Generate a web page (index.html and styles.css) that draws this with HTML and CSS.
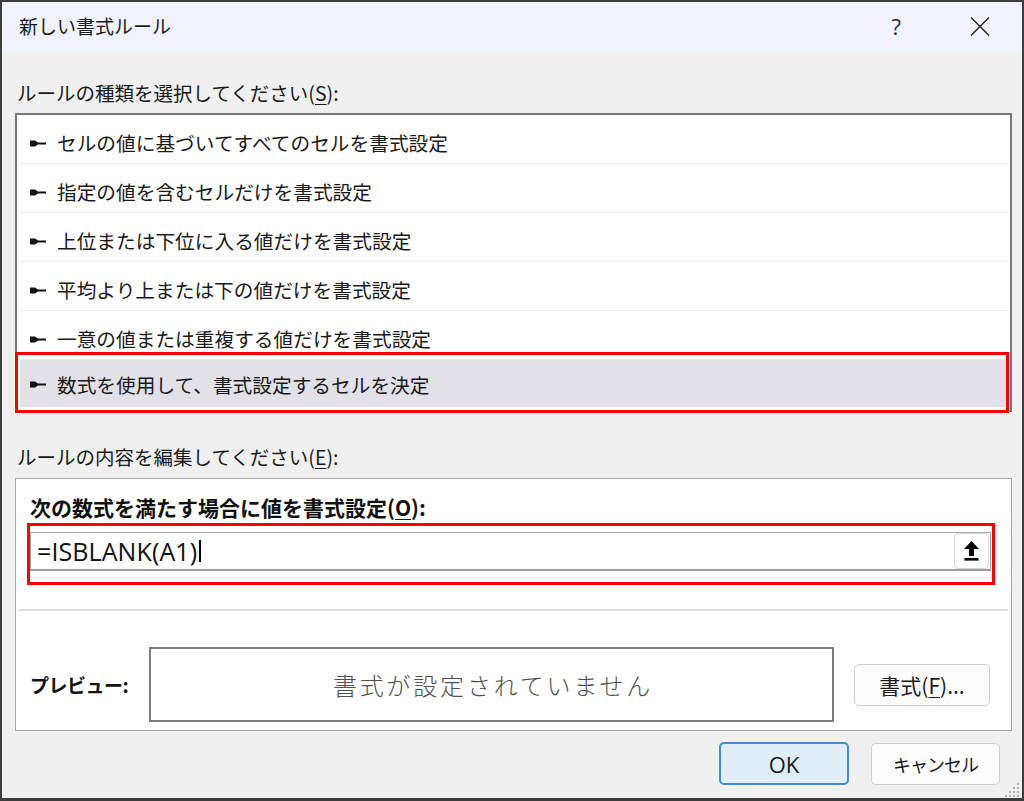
FILE: index.html
```html
<!DOCTYPE html>
<html lang="ja">
<head>
<meta charset="utf-8">
<title>新しい書式ルール</title>
<link rel="stylesheet" href="styles.css">
</head>
<body>
<div class="window">
  <div class="titlebar">
    <span class="title">新しい書式ルール</span>
    <span class="help">?</span>
    <svg class="close" width="20" height="19" viewBox="0 0 20 19"><path d="M1 0.5 L19 18.5 M19 0.5 L1 18.5" stroke="#1f1f1f" stroke-width="1.4" fill="none"/></svg>
  </div>
  <div class="body">
    <div class="label l1">ルールの種類を選択してください(<u>S</u>):</div>
    <div class="list">
      <div class="item"><svg class="bullet" width="16" height="7" viewBox="0 0 16 7"><path d="M0 0.5 H5 L8 2.4 H16 V4.6 H8 L5 6.5 H0 Z" fill="#111"/></svg><span>セルの値に基づいてすべてのセルを書式設定</span></div>
      <div class="item"><svg class="bullet" width="16" height="7" viewBox="0 0 16 7"><path d="M0 0.5 H5 L8 2.4 H16 V4.6 H8 L5 6.5 H0 Z" fill="#111"/></svg><span>指定の値を含むセルだけを書式設定</span></div>
      <div class="item"><svg class="bullet" width="16" height="7" viewBox="0 0 16 7"><path d="M0 0.5 H5 L8 2.4 H16 V4.6 H8 L5 6.5 H0 Z" fill="#111"/></svg><span>上位または下位に入る値だけを書式設定</span></div>
      <div class="item"><svg class="bullet" width="16" height="7" viewBox="0 0 16 7"><path d="M0 0.5 H5 L8 2.4 H16 V4.6 H8 L5 6.5 H0 Z" fill="#111"/></svg><span>平均より上または下の値だけを書式設定</span></div>
      <div class="item"><svg class="bullet" width="16" height="7" viewBox="0 0 16 7"><path d="M0 0.5 H5 L8 2.4 H16 V4.6 H8 L5 6.5 H0 Z" fill="#111"/></svg><span>一意の値または重複する値だけを書式設定</span></div>
      <div class="item selected"><svg class="bullet" width="16" height="7" viewBox="0 0 16 7"><path d="M0 0.5 H5 L8 2.4 H16 V4.6 H8 L5 6.5 H0 Z" fill="#111"/></svg><span>数式を使用して、書式設定するセルを決定</span></div>
      <div class="mark"></div>
    </div>
    <div class="label l2">ルールの内容を編集してください(<u>E</u>):</div>
    <div class="editbox">
      <div class="sublabel">次の数式を満たす場合に値を書式設定(<u>O</u>):</div>
      <div class="formula-mark">
        <div class="formula">
          <span class="ftext">=ISBLANK(A1)</span><span class="caret"></span>
          <button class="collapse" type="button"><svg width="15" height="20" viewBox="0 0 15 20"><path d="M7.5 0 L15 8 H10 V15 H5 V8 H0 Z" fill="#000"/><rect x="0.5" y="17" width="14" height="2.6" fill="#000"/></svg></button>
        </div>
      </div>
      <div class="sep"></div>
      <div class="preview-row">
        <div class="plabel">プレビュー:</div>
        <div class="preview">書式が設定されていません</div>
        <button class="btn fmt" type="button">書式(<u>F</u>)...</button>
      </div>
    </div>
    <div class="actions">
      <button class="btn ok" type="button">OK</button>
      <button class="btn cancel" type="button">キャンセル</button>
    </div>
  </div>
  <svg class="grip" width="16" height="14" viewBox="0 0 16 14"><g fill="#b4b4b4"><rect x="13" y="0" width="2" height="2"/><rect x="9" y="4" width="2" height="2"/><rect x="13" y="4" width="2" height="2"/><rect x="5" y="8" width="2" height="2"/><rect x="9" y="8" width="2" height="2"/><rect x="13" y="8" width="2" height="2"/><rect x="1" y="12" width="2" height="2"/><rect x="5" y="12" width="2" height="2"/><rect x="9" y="12" width="2" height="2"/><rect x="13" y="12" width="2" height="2"/></g></svg>
</div>
</body>
</html>
```
FILE: styles.css
```css
html, body {
  margin: 0;
  padding: 0;
}
body {
  width: 1024px;
  height: 801px;
  overflow: hidden;
  font-family: "Noto Sans CJK JP", "Noto Sans", sans-serif;
  color: #1a1a1a;
  background: #3b3b3b;
}
.window {
  box-sizing: border-box;
  width: 1024px;
  height: 801px;
  border-style: solid;
  border-color: #3c3c3c;
  border-width: 2px 2px 3px 2px;
  background: #f0f0f0;
  position: relative;
  display: flex;
  flex-direction: column;
}
.titlebar {
  height: 51px;
  flex: none;
  box-sizing: border-box;
  background: #f0f3f9;
  display: flex;
  align-items: center;
  padding: 0 32px 3px 17px;
}
.title {
  flex: 1;
  font-size: 19px;
  line-height: 24px;
  color: #1b1b1b;
}
.help {
  font-family: "Open Sans", "Noto Sans", sans-serif;
  font-size: 22px;
  line-height: 24px;
  color: #2a2a2a;
  margin-right: -2px;
}
.close {
  margin-left: 71px;
  display: block;
}
.body {
  flex: 1;
  display: flex;
  flex-direction: column;
  padding: 0 10px 0 13px;
}
.label {
  font-size: 19.5px;
  line-height: 26px;
  padding-left: 2px;
  color: #1a1a1a;
}
.l1 {
  margin-top: 27px;
  margin-bottom: 7px;
}
.l2 {
  margin-top: 32px;
  margin-bottom: 8px;
}
u {
  text-decoration-thickness: 1px;
  text-underline-offset: 3px;
}
.list {
  position: relative;
  box-sizing: border-box;
  height: 299px;
  border: 2px solid #767676;
  background: #fff;
  padding: 0 2px 0 3px;
}
.item {
  box-sizing: border-box;
  height: 49px;
  border-bottom: 1px solid #ececec;
  display: flex;
  align-items: center;
  padding: 8px 0 0 10px;
  font-size: 19.7px;
  line-height: 26px;
  color: #1a1a1a;
}
.bullet {
  flex: none;
  margin-right: 11px;
}
.item.selected {
  background: #e1e1e7;
  border-bottom: none;
  padding-top: 2px;
  height: 47px;
}
.mark {
  position: absolute;
  left: -2px;
  top: 237px;
  width: 994px;
  height: 61px;
  box-sizing: border-box;
  border: 3px solid #ff0000;
}
.editbox {
  box-sizing: border-box;
  height: 253px;
  border: 1px solid #a6a6a6;
  background: #fff;
}
.sublabel {
  margin: 15px 0 0 14px;
  font-size: 21px;
  font-weight: 700;
  line-height: 26px;
  color: #111;
}
.formula-mark {
  margin: 3px 16px 0 11px;
  border: 3px solid #ff0000;
  padding: 6px 1px 11px 0;
}
.formula {
  box-sizing: border-box;
  height: 39px;
  border: 1px solid #a9a9a9;
  border-bottom: 2px solid #9c9c9c;
  display: flex;
  align-items: center;
  padding: 0 1px 0 6px;
}
.ftext {
  font-family: "Open Sans", "Noto Sans", sans-serif;
  font-size: 25px;
  line-height: 30px;
  color: #111;
  letter-spacing: 0.1px;
}
.caret {
  width: 1.5px;
  height: 22px;
  background: #000;
  margin-left: 2px;
}
.collapse {
  margin-left: auto;
  width: 35px;
  height: 36px;
  box-sizing: border-box;
  border: 1px solid #d6d6d6;
  border-radius: 4px;
  background: #fff;
  padding: 0;
  display: flex;
  align-items: center;
  justify-content: center;
}
.collapse svg {
  display: block;
}
.sep {
  margin: 24px 3px 0 3px;
  height: 2px;
  background: #dcdcdc;
}
.preview-row {
  margin-top: 36px;
  display: flex;
  align-items: center;
  padding-left: 14px;
}
.plabel {
  width: 119px;
  flex: none;
  font-size: 19px;
  font-weight: 700;
  line-height: 26px;
  color: #111;
  letter-spacing: -0.5px;
}
.preview {
  box-sizing: border-box;
  width: 685px;
  height: 75px;
  flex: none;
  border: 2px solid #7c7c7c;
  display: flex;
  align-items: center;
  justify-content: center;
  font-size: 24px;
  font-weight: 300;
  letter-spacing: 2.8px;
  color: #505050;
  padding-left: 3px;
}
.btn {
  box-sizing: border-box;
  font-family: "Noto Sans CJK JP", "Noto Sans", sans-serif;
  color: #1a1a1a;
  background: #fdfdfd;
  border: 1px solid #cfcfcf;
  border-radius: 5px;
  padding: 0;
  display: flex;
  align-items: center;
  justify-content: center;
}
.fmt {
  margin-left: 20px;
  width: 136px;
  height: 42px;
  font-size: 21px;
}
.actions {
  margin-top: 11px;
  display: flex;
  justify-content: flex-end;
  padding-right: 12px;
}
.ok {
  width: 130px;
  height: 43px;
  background: #e0eef9;
  border: 2px solid #3f8bd9;
  font-family: "Open Sans", "Noto Sans", sans-serif;
  font-size: 22px;
}
.cancel {
  margin-left: 22px;
  width: 129px;
  height: 42px;
  margin-top: 1px;
  font-size: 18px;
  letter-spacing: -1px;
}
.grip {
  position: absolute;
  right: 2px;
  bottom: 1px;
}
```
